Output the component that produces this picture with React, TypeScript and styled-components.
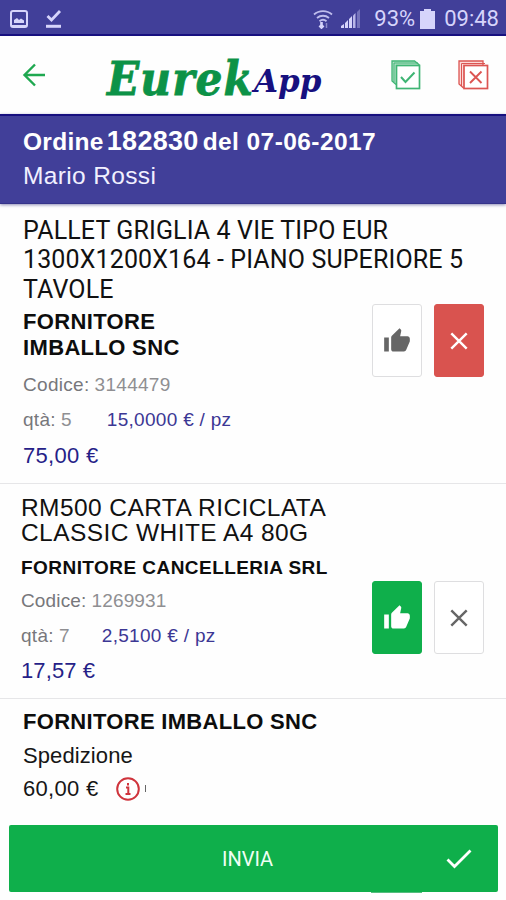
import React from "react";
import styled, { createGlobalStyle } from "styled-components";

const NAVY = "#17107f";
const INDIGO = "#413f99";
const GREEN = "#0faf4b";

const GlobalStyle = createGlobalStyle`
  * { box-sizing: border-box; }
  body { margin: 0; background: #fefefe; }
`;

const Screen = styled.div`
  width: 506px;
  height: 900px;
  overflow: hidden;
  display: flex;
  flex-direction: column;
  background: #fefefe;
  font-family: "Liberation Sans", Arial, sans-serif;
  color: #111;
`;

const StatusBar = styled.div`
  height: 36px;
  flex: none;
  display: flex;
  align-items: center;
  padding: 4px 7px 0 9px;
  background: ${INDIGO};
  border-bottom: 2px solid ${NAVY};
  color: #d6d4fb;
  font: 22px/34px Roboto, sans-serif;
`;

const StatusIcon = styled.svg<{ $gap?: number }>`
  flex: none;
  margin-right: ${(p) => p.$gap ?? 0}px;
`;

const StatusText = styled.span<{ $gap?: number }>`
  margin-right: ${(p) => p.$gap ?? 0}px;
`;

const Spacer = styled.div`
  flex: 1;
`;

const Toolbar = styled.header`
  height: 78px;
  flex: none;
  display: flex;
  align-items: center;
  padding: 0 17px 0 22px;
`;

const Logo = styled.div`
  display: flex;
  align-items: baseline;
  margin-left: 61px;
  width: 223px;
  padding-top: 12px;
  white-space: nowrap;
  font-weight: bold;
  font-style: italic;
  line-height: 60px;
`;

const LogoMain = styled.span`
  font-family: "DejaVu Serif Condensed", "DejaVu Serif", serif;
  font-size: 47px;
  letter-spacing: 1.1px;
  -webkit-text-stroke: 0.8px #0c9247;
  color: #0c9247;
`;

const LogoSub = styled.span`
  font-family: "DejaVu Serif", serif;
  font-size: 31px;
  color: ${NAVY};
  transform: translateY(-3px);
`;

const ToolbarIcon = styled.svg<{ $gap?: number }>`
  flex: none;
  margin-right: ${(p) => p.$gap ?? 0}px;
`;

const OrderBar = styled.section`
  height: 90px;
  flex: none;
  border-top: 2px solid ${NAVY};
  border-bottom: 1px solid #35338a;
  background: ${INDIGO};
  color: #fff;
  padding: 8px 23px 0;
  box-shadow: 0 1px 3px rgba(50, 45, 120, 0.55);
`;

const OrderTitle = styled.h1`
  margin: 0;
  display: flex;
  align-items: baseline;
  height: 35px;
  font-size: 24.5px;
  line-height: 34px;
  letter-spacing: 0.3px;
  white-space: nowrap;
`;

const OrderNumber = styled.span`
  font-size: 27px;
  letter-spacing: 0.3px;
  margin: 0 4px 0 3px;
`;

const OrderDate = styled.span`
  letter-spacing: 0.42px;
`;

const Customer = styled.div`
  color: #f1f0ff;
  font-size: 24.5px;
  line-height: 34px;
  letter-spacing: 0.35px;
`;

const Item = styled.article<{ $height: number; $top: number; $left: number }>`
  height: ${(p) => p.$height}px;
  flex: none;
  padding: ${(p) => p.$top}px 22px 0 ${(p) => p.$left}px;
  border-bottom: 1px solid #e6e6e8;
  &:last-of-type { border-bottom: 0; }
`;

const ItemTitle = styled.h2<{ $roboto?: boolean }>`
  margin: 0;
  font-weight: 400;
  white-space: nowrap;
  font-family: ${(p) => (p.$roboto ? "Roboto" : '"Liberation Sans"')}, sans-serif;
  font-size: ${(p) => (p.$roboto ? 25 : 24.5)}px;
  line-height: ${(p) => (p.$roboto ? 29.4 : 25)}px;
  letter-spacing: ${(p) => (p.$roboto ? 0.13 : 0.42)}px;
`;

const ItemBody = styled.div`
  display: flex;
  justify-content: space-between;
  align-items: flex-start;
`;

const Details = styled.div`
  flex: none;
  white-space: nowrap;
`;

const Line = styled.div<{ $size: number; $gap: number; $spacing?: number; $color?: string }>`
  display: flex;
  align-items: center;
  margin-top: ${(p) => p.$gap}px;
  font-size: ${(p) => p.$size}px;
  line-height: ${(p) => (p.$size > 20 ? 26 : 24)}px;
  letter-spacing: ${(p) => p.$spacing ?? 0.3}px;
  color: ${(p) => p.$color ?? "#161616"};
`;

const Supplier = styled(Line)`
  font-weight: bold;
  color: #0d0d0d;
`;

const Label = styled.span`
  color: #77777b;
  margin-right: 5px;
`;

const Muted = styled.span<{ $gap?: number }>`
  color: #8f8f92;
  margin-right: ${(p) => p.$gap ?? 0}px;
`;

const Price = styled.span`
  color: #3c3794;
`;

const Actions = styled.div<{ $top: number }>`
  display: flex;
  gap: 12px;
  margin-top: ${(p) => p.$top}px;
`;

const ActionButton = styled.button<{ $bg?: string }>`
  width: 50px;
  height: 73px;
  padding: 0;
  display: flex;
  align-items: center;
  justify-content: center;
  border-radius: 3px;
  border: 1px solid ${(p) => p.$bg ?? "#dedee0"};
  background: ${(p) => p.$bg ?? "#fff"};
  color: ${(p) => (p.$bg ? "#fff" : "#666")};
`;

const InfoIcon = styled.svg`
  margin-left: 17px;
`;

const Tick = styled.span`
  width: 1px;
  height: 7px;
  margin: 0 0 2px 5px;
  background: #666;
`;

const SubmitButton = styled.button`
  width: 489px;
  height: 67px;
  flex: none;
  margin: 0 0 0 9px;
  padding: 1px 26px 0 213px;
  display: flex;
  align-items: center;
  justify-content: space-between;
  border: 0;
  border-radius: 2px;
  background: ${GREEN};
  color: #f0fff4;
  font: 20px/24px Roboto, sans-serif;
`;

const HiddenAction = styled.div`
  width: 51px;
  height: 1px;
  flex: none;
  margin-left: 371px;
  background: #55bd7e;
`;

const ThumbUp = () => (
  <svg width="28" height="28" viewBox="0 0 24 24" fill="currentColor">
    <path d="M1 21h4V9H1v12zm22-11c0-1.100-.9-2-2-2h-6.310l.95-4.570.030-.320c0-.410-.170-.790-.440-1.060L14.170 1 7.590 7.590C7.220 7.950 7 8.450 7 9v10c0 1.100.9 2 2 2h9c.83 0 1.540-.5 1.840-1.220l3.020-7.050c.090-.230.140-.470.140-.730v-2z" />
  </svg>
);

const Cross = () => (
  <svg width="18" height="18" viewBox="0 0 18 18" fill="none" stroke="currentColor" strokeWidth="2.4">
    <path d="M1.300 1.300l15.400 15.400M16.700 1.300L1.300 16.700" />
  </svg>
);

export default function App() {
  return (
    <Screen>
      <GlobalStyle />
      <StatusBar>
        <StatusIcon $gap={16} width="20" height="20" viewBox="0 0 20 20">
          <rect x="2" y="2" width="16" height="16" rx="2" fill="none" stroke="currentColor" strokeWidth="2" />
          <path d="M2 16h16v2H2zM5 14v-3l3-2 2 2 2-1.500 3 2V14z" fill="currentColor" />
        </StatusIcon>
        <StatusIcon width="18" height="20" viewBox="0 0 18 20" fill="none" stroke="currentColor">
          <path d="M2.500 7l4 4L15 2" strokeWidth="2.800" />
          <path d="M1 17.300h15" strokeWidth="3" />
        </StatusIcon>
        <Spacer />
        <StatusIcon $gap={8} width="20" height="20" viewBox="0 0 20 20" fill="none" stroke="currentColor">
          <path d="M1 5.500c5-4.500 13-4.500 18 0M4 9c3.500-3 8.500-3 12 0M6.500 12.200c2-1.700 5-1.700 7 0" strokeWidth="1.800" opacity=".85" />
          <path d="M8.500 18.500v-5.500M6.500 16.500l2 2 2-2" strokeWidth="2.600" />
          <path d="M13.500 19v-5" strokeWidth="1.500" opacity=".5" />
        </StatusIcon>
        <StatusIcon $gap={13} width="20" height="20" viewBox="0 0 20 20" fill="currentColor">
          <path d="M0 19v-2l3-2v4z M4 19v-5l3-3v8z M8 19v-9l3-3v12z" />
          <path d="M12 19V6.500L14.500 4v15z" opacity=".8" />
          <path d="M16 19V3l3-3v19z" opacity=".35" />
        </StatusIcon>
        <StatusText $gap={5}>93%</StatusText>
        <StatusIcon $gap={9} width="15" height="20" viewBox="0 0 15 20" fill="currentColor">
          <path d="M4 0h7v2h4v18H0V2h4z" />
        </StatusIcon>
        <StatusText>09:48</StatusText>
      </StatusBar>

      <Toolbar>
        <ToolbarIcon width="24" height="24" viewBox="0 0 24 24" fill="none" stroke="#1fa850" strokeWidth="2.400">
          <path d="M23 12H3M13 1.500L2.500 12 13 22.500" />
        </ToolbarIcon>
        <Logo>
          <LogoMain>Eurek</LogoMain>
          <LogoSub>App</LogoSub>
        </Logo>
        <Spacer />
        <ToolbarIcon $gap={37} width="30" height="30" viewBox="0 0 30 30" fill="none" stroke="#3fb574">
          <path d="M5 24.500L1 21V1h22.500l5 4" fill="#b5e0c8" strokeWidth="1.300" />
          <path d="M3 22V3h24" strokeWidth="1" />
          <rect x="5.500" y="5.500" width="23" height="23" fill="#fff" strokeWidth="1.700" />
          <path d="M10 17l4.500 5 9-9.500" strokeWidth="2" />
        </ToolbarIcon>
        <ToolbarIcon width="31" height="30" viewBox="0 0 31 30" fill="none" stroke="#dc5552">
          <path d="M5.500 28L1 24V1h24v4.500" fill="#fbdad8" strokeWidth="1.300" />
          <path d="M3.500 26V3.500H27" strokeWidth="1" />
          <rect x="6" y="5.500" width="23.500" height="23" fill="#fff" strokeWidth="1.700" />
          <path d="M12 11.500l11.500 11.500M23.500 11.500L12 23" strokeWidth="1.900" />
        </ToolbarIcon>
      </Toolbar>

      <OrderBar>
        <OrderTitle>
          Ordine<OrderNumber>182830</OrderNumber>
          <OrderDate>del 07-06-2017</OrderDate>
        </OrderTitle>
        <Customer>Mario Rossi</Customer>
      </OrderBar>

      <Item $height={280} $top={12} $left={23}>
        <ItemTitle $roboto>
          PALLET GRIGLIA 4 VIE TIPO EUR
          <br />
          1300X1200X164 - PIANO SUPERIORE 5
          <br />
          TAVOLE
        </ItemTitle>
        <ItemBody>
          <Details>
            <Supplier $size={22} $gap={5} $spacing={0.35}>
              FORNITORE
              <br />
              IMBALLO SNC
            </Supplier>
            <Line $size={19} $gap={12}>
              <Label>Codice:</Label>
              <Muted>3144479</Muted>
            </Line>
            <Line $size={19} $gap={11}>
              <Label>qtà:</Label>
              <Muted $gap={35}>5</Muted>
              <Price>15,0000 € / pz</Price>
            </Line>
            <Line $size={22} $gap={11} $color="#261f88">75,00 €</Line>
          </Details>
          <Actions $top={0}>
            <ActionButton><ThumbUp /></ActionButton>
            <ActionButton $bg="#d9534f"><Cross /></ActionButton>
          </Actions>
        </ItemBody>
      </Item>

      <Item $height={215} $top={11} $left={21}>
        <ItemTitle>
          RM500 CARTA RICICLATA
          <br />
          CLASSIC WHITE A4 80G
        </ItemTitle>
        <ItemBody>
          <Details>
            <Supplier $size={19} $gap={11} $spacing={0.45}>FORNITORE CANCELLERIA SRL</Supplier>
            <Line $size={19} $gap={9} $spacing={0.15}>
              <Label>Codice:</Label>
              <Muted>1269931</Muted>
            </Line>
            <Line $size={19} $gap={11}>
              <Label>qtà:</Label>
              <Muted $gap={32}>7</Muted>
              <Price>2,5100 € / pz</Price>
            </Line>
            <Line $size={22} $gap={10} $spacing={0.1} $color="#261f88">17,57 €</Line>
          </Details>
          <Actions $top={36}>
            <ActionButton $bg={GREEN}><ThumbUp /></ActionButton>
            <ActionButton><Cross /></ActionButton>
          </Actions>
        </ItemBody>
      </Item>

      <Item $height={126} $top={10} $left={23}>
        <Supplier $size={22} $gap={0} $spacing={0.3}>FORNITORE IMBALLO SNC</Supplier>
        <Line $size={22} $gap={8} $spacing={0.1}>Spedizione</Line>
        <Line $size={22} $gap={7}>
          60,00 €
          <InfoIcon width="24" height="24" viewBox="0 0 24 24" fill="none" stroke="#cf343c">
            <circle cx="12" cy="12" r="10.800" strokeWidth="2" />
            <path d="M12 6v2.500M10 10.500h2.300v6M9.500 17h5" strokeWidth="2" />
          </InfoIcon>
          <Tick />
        </Line>
      </Item>

      <SubmitButton>
        INVIA
        <svg width="26" height="20" viewBox="0 0 26 20" fill="none" stroke="#fff" strokeWidth="2.800">
          <path d="M1.500 10.500l7 7L24.500 1.500" />
        </svg>
      </SubmitButton>
      <HiddenAction />
    </Screen>
  );
}
